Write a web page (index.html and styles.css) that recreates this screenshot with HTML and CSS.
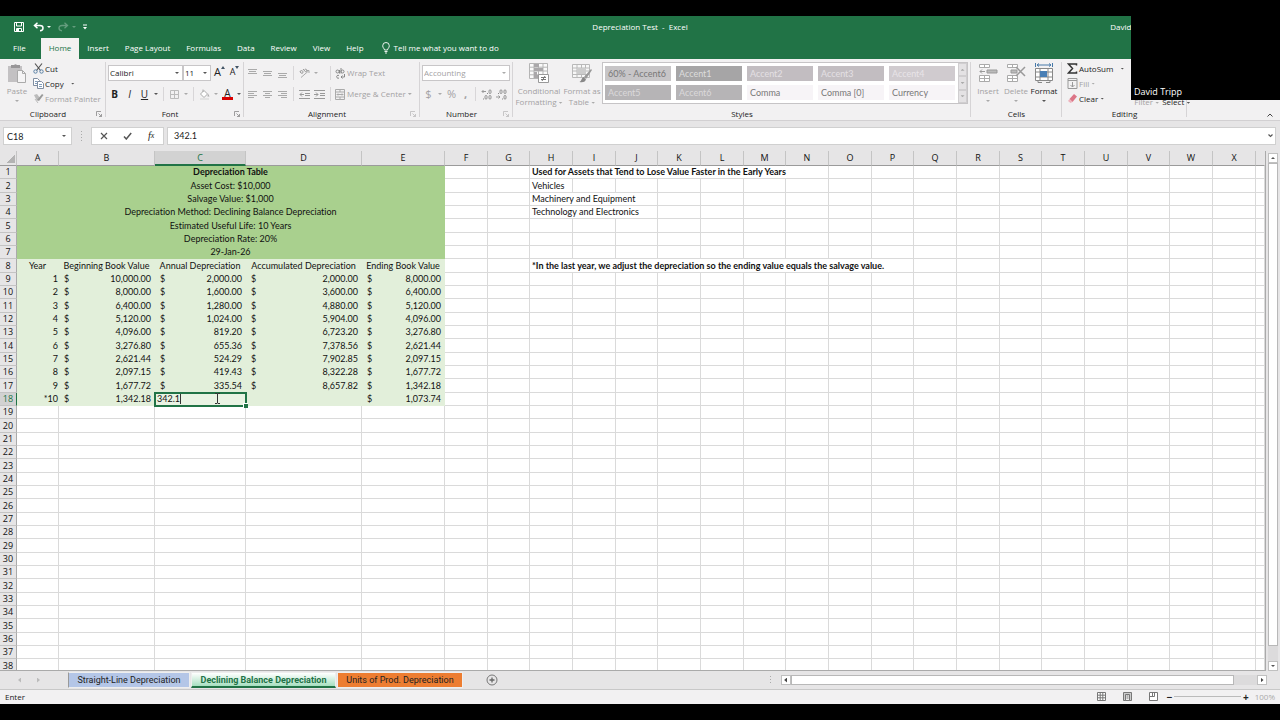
FILE: index.html
```html
<!DOCTYPE html>
<html lang="en">
<head>
<meta charset="utf-8">
<title>Depreciation Test - Excel</title>
<link rel="stylesheet" href="styles.css">
</head>
<body>
<div class="app">
  <header class="titlebar">
    <div class="quick">
      <button class="q-save" aria-label="Save"><svg width="10" height="10" viewBox="0 0 10 10"><path d="M.5.5h9v9h-9z M2.500.5v3.500h5V.5 M2.500 9.500V6.500h5v3" fill="none" stroke="#fff"/><path d="M3 7h2v2H3z" fill="#fff"/></svg></button>
      <button class="q-icon" aria-label="Undo"><svg width="11" height="10" viewBox="0 0 11 10"><path d="M4.500.8L1.500 3.500l3 2.700M1.500 3.500H7c4 0 4 5 0 5.300" fill="none" stroke="#fff" stroke-width="1.500"/></svg></button>
      <i class="caret light"></i>
      <button class="q-icon dim" aria-label="Redo"><svg width="11" height="10" viewBox="0 0 11 10"><path d="M6.500.8l3 2.700-3 2.700M9.500 3.500H4c-4 0-4 5 0 5.300" fill="none" stroke="#fff" stroke-width="1.300"/></svg></button>
      <i class="caret light dim"></i>
      <button class="q-more" aria-label="Customize toolbar"><svg width="4" height="6" viewBox="0 0 4 6"><path d="M0 1h4" stroke="#fff"/><path d="M0 3h4L2 5.500z" fill="#fff"/></svg></button>
    </div>
    <h1>Depreciation Test&nbsp; -&nbsp; Excel</h1>
    <span class="user">David Tripp</span>
  </header>
  <nav class="tabs">
    <button class="file">File</button>
    <button class="on">Home</button>
    <button>Insert</button>
    <button>Page Layout</button>
    <button>Formulas</button>
    <button>Data</button>
    <button>Review</button>
    <button>View</button>
    <button>Help</button>
    <button class="tell"><svg width="8" height="12" viewBox="0 0 8 12"><path d="M2.500 8C2.500 6.500.7 6 .7 3.800a3.300 3.300 0 0 1 6.600 0C7.300 6 5.500 6.500 5.500 8zM2.500 9.500h3M3 11h2" fill="none" stroke="#fff" stroke-width=".9"/></svg>Tell me what you want to do</button>
  </nav>

  <section class="ribbon">
    <div class="group g-clip">
      <div class="body">
        <button class="big off paste"><svg width="20" height="20" viewBox="0 0 20 20"><path d="M1 3h14v16H1z" fill="#c3c1c3"/><path d="M4 2h3a2 2 0 0 1 3 0h3v3H4z" fill="#989698"/><path d="M10.500 7.500h5l3 3v9h-8z" fill="#f5f4f5" stroke="#aaa"/><path d="M15.500 7.500v3h3" fill="none" stroke="#aaa"/></svg><span>Paste</span><i class="caret"></i></button>
        <div class="stack">
          <button><svg width="11" height="11" viewBox="0 0 11 11"><path d="M2 .5l5.500 7M9 .5L3.500 7.500" stroke="#555" stroke-width="1.200"/><circle cx="2.500" cy="8.500" r="1.700" fill="none" stroke="#5c82a6"/><circle cx="8.500" cy="8.500" r="1.700" fill="none" stroke="#5c82a6"/></svg>Cut</button>
          <button><svg width="11" height="11" viewBox="0 0 11 11"><path d="M.5.5h4l2 2v5h-6z" fill="#fff" stroke="#7f8da0"/><path d="M4.500 3.500h4l2 2v5h-6z" fill="#fff" stroke="#7f8da0"/><path d="M6 6.500h3M6 8.500h3M2 3.500h2M2 5.500h2" stroke="#7f9bbb"/></svg>Copy<i class="caret"></i></button>
          <button class="off"><svg width="11" height="11" viewBox="0 0 11 11"><path d="M1 2l3-1 3 4-3 3z" fill="#bbb"/><path d="M4 7l5-6 1.500 1L6 8z" fill="#999"/><path d="M2 6l3 4" stroke="#bbb"/></svg>Format Painter</button>
        </div>
      </div>
      <div class="label">Clipboard<svg class="launch" width="6" height="6" viewBox="0 0 6 6"><path d="M.5 5V.5H5M2.500 2.500l3 3M5.500 3v2.500H3" fill="none" stroke="#888" stroke-width=".8"/></svg></div>
    </div>

    <div class="group g-font">
      <div class="body rows">
        <div class="row">
          <span class="combo c-name"><select aria-label="Font"><option>Calibri</option></select></span>
          <span class="combo c-size"><select aria-label="Font size"><option>11</option></select></span>
          <button class="t grow" aria-label="Increase font size">A<svg width="4" height="3" viewBox="0 0 4 3"><path d="M0 3l2-3 2 3z" fill="#456"/></svg></button>
          <button class="t shrink" aria-label="Decrease font size">A<svg width="4" height="3" viewBox="0 0 4 3"><path d="M0 0l2 3 2-3z" fill="#456"/></svg></button>
        </div>
        <div class="row">
          <button class="t"><b>B</b></button>
          <button class="t"><em>I</em></button>
          <button class="t"><u>U</u></button>
          <i class="caret"></i><i class="sep"></i>
          <button class="t" aria-label="Borders"><svg width="9" height="9" viewBox="0 0 9 9"><path d="M.5.5h8v8h-8zM4.500.5v8M.5 4.500h8" fill="none" stroke="#bbb"/></svg></button>
          <i class="caret faint"></i><i class="sep"></i>
          <button class="t" aria-label="Fill color"><svg width="11" height="11" viewBox="0 0 11 11"><path d="M1.500 5L5 1.500l3.500 3.500L5 8.500zM4 3V.5" fill="#fff" stroke="#aaa"/><path d="M9 4.500l1.500 3H8.500z" fill="#aaa"/><path d="M1 10h9" stroke="#ddd" stroke-width="1.500"/></svg></button>
          <i class="caret faint"></i>
          <button class="t ink" aria-label="Font color">A</button>
          <i class="caret"></i>
        </div>
      </div>
      <div class="label">Font<svg class="launch" width="6" height="6" viewBox="0 0 6 6"><path d="M.5 5V.5H5M2.500 2.500l3 3M5.500 3v2.500H3" fill="none" stroke="#888" stroke-width=".8"/></svg></div>
    </div>

    <div class="group g-align">
      <div class="body rows off">
        <div class="row">
          <button class="t" aria-label="Top align"><svg width="9" height="11" viewBox="0 0 9 11"><path d="M0 1.500h9M1 3.500h7M0 5.500h9" stroke="#aaa"/></svg></button>
          <button class="t" aria-label="Middle align"><svg width="9" height="11" viewBox="0 0 9 11"><path d="M0 3.500h9M1 5.500h7M0 7.500h9" stroke="#aaa"/></svg></button>
          <button class="t" aria-label="Bottom align"><svg width="9" height="11" viewBox="0 0 9 11"><path d="M0 5.500h9M1 7.500h7M0 9.500h9" stroke="#aaa"/></svg></button>
          <i class="sep"></i>
          <button class="t" aria-label="Orientation"><svg width="11" height="10" viewBox="0 0 11 10"><path d="M2 9.500L9.500 3M7.500 2.500h2.500v2.500" fill="none" stroke="#aaa"/><path d="M1 4a1.500 1.500 0 1 1 2 1.500zM4 1l2.500 2.800a1.300 1.300 0 1 0-1-2" fill="none" stroke="#999"/></svg></button>
          <i class="caret faint"></i><i class="sep s2"></i>
          <button class="wide"><svg width="10" height="11" viewBox="0 0 10 11"><circle cx="2.500" cy="3.500" r="1.500" fill="none" stroke="#888"/><path d="M4.500 2v3.500M6 0v5.500" stroke="#888"/><circle cx="7.500" cy="3.500" r="1.500" fill="none" stroke="#888"/><path d="M4 7.500a1.500 1.500 0 1 0 0 2.500M9.500 6v3H6M7.500 7.500L6 9l1.500 1.500" fill="none" stroke="#888"/></svg>Wrap Text</button>
        </div>
        <div class="row">
          <button class="t" aria-label="Align left"><svg width="9" height="9" viewBox="0 0 9 9"><path d="M0 1.500h9M0 3.500h6M0 5.500h9M0 7.500h6" stroke="#aaa"/></svg></button>
          <button class="t" aria-label="Center"><svg width="9" height="9" viewBox="0 0 9 9"><path d="M0 1.500h9M2 3.500h5M0 5.500h9M2 7.500h5" stroke="#aaa"/></svg></button>
          <button class="t" aria-label="Align right"><svg width="9" height="9" viewBox="0 0 9 9"><path d="M0 1.500h9M3 3.500h6M0 5.500h9M3 7.500h6" stroke="#aaa"/></svg></button>
          <i class="sep"></i>
          <button class="t" aria-label="Decrease indent"><svg width="11" height="9" viewBox="0 0 11 9"><path d="M0 .5h11M6 3.500h5M6 5.500h5M0 8.500h11M5 4.500H1M3 2.500l-2 2 2 2" fill="none" stroke="#999"/></svg></button>
          <button class="t" aria-label="Increase indent"><svg width="11" height="9" viewBox="0 0 11 9"><path d="M0 .5h11M6 3.500h5M6 5.500h5M0 8.500h11M0 4.500h4M2 2.500l2 2-2 2" fill="none" stroke="#999"/></svg></button>
          <i class="sep s1"></i>
          <button class="wide"><svg width="10" height="11" viewBox="0 0 10 11"><path d="M.5.5h9v10h-9zM.5 3h9M.5 8h9M5 .5V3M5 8v2.500M2 5.500h6M3 4.500L2 5.500l1 1M7 4.500l1 1-1 1" fill="none" stroke="#aaa"/></svg>Merge &amp; Center</button><i class="caret faint"></i>
        </div>
      </div>
      <div class="label">Alignment<svg class="launch" width="6" height="6" viewBox="0 0 6 6"><path d="M.5 5V.5H5M2.500 2.500l3 3M5.500 3v2.500H3" fill="none" stroke="#bbb" stroke-width=".8"/></svg></div>
    </div>

    <div class="group g-num">
      <div class="body rows off">
        <div class="row"><span class="combo c-fmt"><select aria-label="Number format"><option>Accounting</option></select></span></div>
        <div class="row">
          <button class="t sym">$</button><i class="caret faint"></i>
          <button class="t sym">%</button>
          <button class="t sym comma">,</button><i class="sep"></i>
          <button class="t" aria-label="Increase decimal"><svg width="11" height="11" viewBox="0 0 11 11"><path d="M5 2.500H1M2.500 1L1 2.500 2.500 4" fill="none" stroke="#999"/><path d="M6 4.500h1" stroke="#888"/><rect x="8" y=".9" width="2" height="3.600" rx="1" fill="none" stroke="#888" stroke-width=".9"/><path d="M2 10h1" stroke="#888"/><rect x="4" y="6.500" width="2" height="3.600" rx="1" fill="none" stroke="#888" stroke-width=".9"/><rect x="8" y="6.500" width="2" height="3.600" rx="1" fill="none" stroke="#888" stroke-width=".9"/></svg></button>
          <button class="t" aria-label="Decrease decimal"><svg width="11" height="11" viewBox="0 0 11 11"><path d="M0 8h4M2.500 6.500L4 8 2.500 9.500" fill="none" stroke="#999"/><path d="M2 4.500h1" stroke="#888"/><rect x="4" y=".9" width="2" height="3.600" rx="1" fill="none" stroke="#888" stroke-width=".9"/><rect x="8" y=".9" width="2" height="3.600" rx="1" fill="none" stroke="#888" stroke-width=".9"/><path d="M6 10h1" stroke="#888"/><rect x="8" y="6.500" width="2" height="3.600" rx="1" fill="none" stroke="#888" stroke-width=".9"/></svg></button>
        </div>
      </div>
      <div class="label">Number<svg class="launch" width="6" height="6" viewBox="0 0 6 6"><path d="M.5 5V.5H5M2.500 2.500l3 3M5.500 3v2.500H3" fill="none" stroke="#bbb" stroke-width=".8"/></svg></div>
    </div>

    <div class="group g-style">
      <div class="body off">
        <button class="big cond"><svg width="20" height="20" viewBox="0 0 20 20"><path d="M.5.5h18v15H.5zM5 .5v15M9.500.5v15M14 .5v15M.5 4.200h18M.5 8h18M.5 11.800h18" fill="#fafafa" stroke="#b5b5b5"/><path d="M5 1h5v3H5zM5 5h9v3H5zM5 9h3v3H5zM5 12h6v3H5z" fill="#a9a7a9"/><path d="M9.500 11.500h10v8h-10z" fill="#fff" stroke="#999"/><path d="M12 14.500h5M12 16.500h5M16 13l-3 5" stroke="#777"/></svg><span>Conditional<br>Formatting <i class="caret"></i></span></button>
        <button class="big fmt"><svg width="20" height="20" viewBox="0 0 20 20"><path d="M.5 1.500h17v13H.5zM5 1.500v13M9.500 1.500v13M13.500 1.500v13M.5 5h17M.5 8h17M.5 11.500h17" fill="#f7f7f7" stroke="#b9b9b9"/><path d="M5 5h9v6H5z" fill="#ccc"/><path d="M19 6l-7 8 2 2 6-9z" fill="#999"/><path d="M11.500 14l2.500 2.500c-1 3-4 3-6.500 2.500 2-1 2-4 4-5z" fill="#888"/></svg><span>Format as<br>Table <i class="caret"></i></span></button>
        <div class="gallery">
          <div class="swatches">
            <button class="s60">60% - Accent6</button><button class="s1">Accent1</button><button class="s2c">Accent2</button><button class="s2c">Accent3</button><button class="s4">Accent4</button>
            <button class="s5">Accent5</button><button class="s5">Accent6</button><button>Comma</button><button>Comma [0]</button><button>Currency</button>
          </div>
          <div class="spin"><button aria-label="Scroll up"><i class="caret up faint"></i></button><button aria-label="Scroll down"><i class="caret faint"></i></button><button aria-label="More styles"><i class="caret faint"></i></button></div>
        </div>
      </div>
      <div class="label">Styles</div>
    </div>

    <div class="group g-cells">
      <div class="body">
        <button class="big off"><svg width="20" height="20" viewBox="0 0 20 20"><path d="M1.500 1.500h10v3h-10zM6.500 1.500v3M1.500 12.500h10v6h-10zM6.500 12.500v6M1.500 15.500h10" fill="#fff" stroke="#aaa"/><path d="M9 7h10v3H9z" fill="#bbb" stroke="#999"/><path d="M7 8.500H2M4 6.500l-2 2 2 2" fill="none" stroke="#999"/></svg><span>Insert</span><i class="caret"></i></button>
        <button class="big off"><svg width="20" height="20" viewBox="0 0 20 20"><path d="M1.500 1.500h10v3h-10zM6.500 1.500v3M1.500 12.500h10v6h-10zM6.500 12.500v6M1.500 15.500h10" fill="#fff" stroke="#aaa"/><path d="M5 7h6v3H5z" fill="#bbb" stroke="#999"/><path d="M10 4l9 9M19 4l-9 9" stroke="#999" stroke-width="1.500"/></svg><span>Delete</span><i class="caret"></i></button>
        <button class="big"><svg width="20" height="20" viewBox="0 0 20 20"><path d="M1.500 0v4M18.500 0v4M3 2h14M5 .500L3 2l2 1.500M15 .500L17 2l-2 1.500" fill="none" stroke="#4779a8"/><path d="M1.500 5.500h17v12h-17zM6 5.500v12M14 5.500v12M1.500 9h17M1.500 14h17" fill="#fff" stroke="#888"/><path d="M6 8h7v6H6z" fill="#4a7fb5"/><path d="M4 17.500v2h4M16 17.500v2h-4" fill="none" stroke="#888"/></svg><span>Format</span><i class="caret"></i></button>
      </div>
      <div class="label">Cells</div>
    </div>

    <div class="group g-edit">
      <div class="body">
        <div class="stack">
          <button><svg width="11" height="11" viewBox="0 0 11 11"><path d="M9.500 2.500V1h-8l4 4.500-4 4.500h8V8.500" fill="none" stroke="#333" stroke-width="1.500"/></svg>AutoSum<i class="caret"></i></button>
          <button class="off"><svg width="11" height="11" viewBox="0 0 11 11"><path d="M1 .5h9v10H1zM1 2.500h9M5.500 4v5M3.500 7l2 2 2-2" fill="none" stroke="#999"/></svg>Fill<i class="caret near"></i></button>
          <button><svg width="11" height="11" viewBox="0 0 11 11"><path d="M2.500 6L7 1l3 2.500L5.500 9z" fill="#dc7587"/><path d="M2.500 6L1 8l2.500 2L5.500 9z" fill="#eeb2bc"/></svg>Clear<i class="caret near"></i></button>
        </div>
        <div class="more"><button class="off">Filter <i class="caret"></i></button><button>Select <i class="caret"></i></button></div>
      </div>
      <div class="label">Editing</div>
    </div>
    <button class="collapse" aria-label="Collapse ribbon"><svg width="6" height="4" viewBox="0 0 6 4"><path d="M.5 3.500L3 1l2.500 2.500" fill="none" stroke="#444"/></svg></button>
  </section>

  <section class="fbar">
    <span class="combo namebox"><input value="C18" aria-label="Name box"></span>
    <svg class="dots" width="3" height="10" viewBox="0 0 3 10"><path d="M1.500 0v10" stroke="#aaa" stroke-dasharray="1 2"/></svg>
    <div class="fbtns">
      <button aria-label="Cancel"><svg width="8" height="8" viewBox="0 0 8 8"><path d="M1 1l6 6M7 1L1 7" stroke="#555" stroke-width="1.200"/></svg></button>
      <button aria-label="Enter"><svg width="9" height="8" viewBox="0 0 9 8"><path d="M1 4.500L3.300 7 8.200 1" fill="none" stroke="#555" stroke-width="1.500"/></svg></button>
      <button class="fx" aria-label="Insert function"><em>f</em><small>x</small></button>
    </div>
    <span class="formula"><input value="342.1" aria-label="Formula bar"><svg width="5" height="4" viewBox="0 0 5 4"><path d="M.5.5l2 2 2-2" fill="none" stroke="#555" stroke-width="1.200"/></svg></span>
  </section>

  <main class="sheet">
    <div class="gridwrap"><table class="grid" id="grid"></table></div>
    <div class="vscroll"><button aria-label="Scroll up"><i class="caret up"></i></button><div class="thumb"></div><div class="track"></div><button aria-label="Scroll down"><i class="caret"></i></button></div>
  </main>

  <footer class="sheetbar">
    <div class="sheetnav"><i class="arrow l"></i><i class="arrow r"></i></div>
    <button class="st blue">Straight-Line Depreciation</button>
    <button class="st green">Declining Balance Depreciation</button>
    <button class="st orange">Units of Prod. Depreciation</button>
    <button class="plus" aria-label="New sheet"><svg width="12" height="12" viewBox="0 0 12 12"><circle cx="6" cy="6" r="5" fill="none" stroke="#777"/><path d="M6 3.500v5M3.500 6h5" stroke="#666" stroke-width="1.300"/></svg></button>
    <svg class="dots grip" width="3" height="8" viewBox="0 0 3 8"><path d="M1.500 0v8" stroke="#aaa" stroke-dasharray="1 2"/></svg>
    <div class="hscroll"><button aria-label="Scroll left"><i class="arrow l dark"></i></button><div class="thumb"></div><div class="track"></div><button aria-label="Scroll right"><i class="arrow r dark"></i></button></div>
  </footer>
  <div class="status">
    <span class="mode">Enter</span>
    <button aria-label="Normal view"><svg width="9" height="9" viewBox="0 0 9 9"><path d="M.5.5h8v8h-8zM3.200.5v8M5.800.5v8M.5 3.200h8M.5 5.800h8" fill="#fff" stroke="#777"/></svg></button>
    <button aria-label="Page layout view"><svg width="9" height="9" viewBox="0 0 9 9"><path d="M.5.5h8v8h-8z" fill="#ccc" stroke="#777"/><path d="M2.500 2.500h4v6h-4zM3.500 4h2M3.500 6h2" fill="#eee" stroke="#777"/></svg></button>
    <button aria-label="Page break view"><svg width="9" height="9" viewBox="0 0 9 9"><path d="M.5.5h8v8h-8zM3.500.5v4M.5 4.500h5M5.500.5v4" fill="#fff" stroke="#777"/></svg></button>
    <div class="zoom"><span>−</span><i class="rail"></i><span>+</span></div>
    <span class="pct">100%</span>
  </div>
  <div class="cam"><span>David Tripp</span></div>
</div>
<script src="grid.js"></script>
</body>
</html>
```
FILE: grid.js
```js
const columns = [42, 96, 91, 116, 83];
const letters = "ABCDEFGHIJKLMNOPQRSTUVWX".split("");
const wideCycle = [43, 42, 43];
const banner = ["Depreciation Table", "Asset Cost: $10,000", "Salvage Value: $1,000",
  "Depreciation Method: Declining Balance Depreciation", "Estimated Useful Life: 10 Years",
  "Depreciation Rate: 20%", "29-Jan-26"];
const heads = ["Year", "Beginning Book Value", "Annual Depreciation", "Accumulated Depreciation", "Ending Book Value"];
const schedule = [
  ["1", "10,000.00", "2,000.00", "2,000.00", "8,000.00"],
  ["2", "8,000.00", "1,600.00", "3,600.00", "6,400.00"],
  ["3", "6,400.00", "1,280.00", "4,880.00", "5,120.00"],
  ["4", "5,120.00", "1,024.00", "5,904.00", "4,096.00"],
  ["5", "4,096.00", "819.20", "6,723.20", "3,276.80"],
  ["6", "3,276.80", "655.36", "7,378.56", "2,621.44"],
  ["7", "2,621.44", "524.29", "7,902.85", "2,097.15"],
  ["8", "2,097.15", "419.43", "8,322.28", "1,677.72"],
  ["9", "1,677.72", "335.54", "8,657.82", "1,342.18"],
  ["*10", "1,342.18", null, "", "1,073.74"]
];
const notes = {
  1: { text: "Used for Assets that Tend to Lose Value Faster in the Early Years", span: 7, bold: true },
  2: { text: "Vehicles", span: 1 },
  3: { text: "Machinery and Equipment", span: 3 },
  4: { text: "Technology and Electronics", span: 3 },
  8: { text: "*In the last year, we adjust the depreciation so the ending value equals the salvage value.", span: 9, bold: true }
};

const widths = columns.concat(letters.slice(5).map((_, i) => wideCycle[i % 3]));
let html = '<colgroup><col style="width:17px">' +
  widths.map(w => `<col style="width:${w}px">`).join("") + "<col></colgroup>";
html += '<thead><tr><th class="corner"></th>' +
  letters.map(l => `<th${l === "C" ? ' class="sel"' : ""}>${l}</th>`).join("") + "<th></th></tr></thead><tbody>";

for (let r = 1; r <= 38; r++) {
  html += `<tr><th${r === 18 ? ' class="sel"' : ""}>${r}</th>`;
  if (r <= 7) {
    html += `<td colspan="5" class="banner${r === 1 ? " bold" : ""}">${banner[r - 1]}</td>`;
  } else if (r === 8) {
    html += heads.map(h => `<td class="fill head">${h}</td>`).join("");
  } else if (r <= 18) {
    const row = schedule[r - 9];
    html += `<td class="fill year">${row[0]}</td>`;
    html += row.slice(1).map(v => {
      if (v === null) return '<td class="fill active"><div><span>342.1</span><svg width="7" height="11" viewBox="0 0 7 11"><path d="M1 .5h2l.5.5.5-.5h2M3.500 1v9M1 10.500h2l.5-.5.5.5h2" fill="none" stroke="#333"/></svg></div></td>';
      if (v === "") return '<td class="fill"></td>';
      return `<td class="fill"><div class="money"><span>$</span><span>${v}</span></div></td>`;
    }).join("");
  } else {
    html += "<td></td>".repeat(5);
  }
  html += "<td></td><td></td>";
  const note = notes[r];
  const span = note ? note.span : 0;
  if (note) html += `<td colspan="${span}" class="note${note.bold ? " bold" : ""}">${note.text}</td>`;
  html += "<td></td>".repeat(18 - span) + "</tr>";
}
document.getElementById("grid").innerHTML = html + "</tbody>";
```
FILE: styles.css
```css
* { box-sizing: border-box; }
body { margin: 0; background: #000; color: #222; font: 8px/12px "Open Sans", "Noto Sans", sans-serif; }
button, input, select { font: inherit; color: inherit; border: 0; padding: 0; margin: 0; background: none; border-radius: 0; outline: 0; }
button { white-space: nowrap; }
svg { flex: none; display: block; }
.app { position: relative; height: 100vh; padding: 16px 0; display: flex; flex-direction: column; }

.caret { display: inline-block; flex: none; width: 4px; height: 2px; background: #555; clip-path: polygon(0 0, 100% 0, 50% 100%); vertical-align: middle; }
.caret.up { clip-path: polygon(50% 0, 100% 100%, 0 100%); }
.caret.light { background: #fff; }
.off .caret, .caret.faint { background: #aaa; }
.off { color: #a3a1a3; }

.titlebar { flex: none; height: 22px; background: #217346; color: #fff; display: grid; grid-template-columns: 1fr auto 1fr; align-items: center; }
.titlebar h1 { margin: 0; font-size: 8px; line-height: 12px; font-weight: 400; }
.quick { display: flex; align-items: center; padding-left: 14px; }
.quick button { margin-right: 9px; }
.quick .q-icon { margin: 0 3px 0 0; }
.quick .caret { margin-right: 7px; }
.quick .dim { opacity: .3; }
.quick .q-more { margin: 0; }
.user { justify-self: end; padding-right: 127px; }

.tabs { flex: none; height: 21px; background: #217346; color: #fff; display: flex; }
.tabs button { padding: 0 8px 1px; height: 21px; }
.tabs .file { padding: 0 15px 1px 13px; }
.tabs .on { background: #f3f2f1; color: #217346; }
.tabs .tell { display: flex; align-items: center; gap: 4px; padding-left: 10px; }

.ribbon { flex: none; height: 62px; background: #f2f1f2; border-bottom: 1px solid #d2d0d2; display: flex; position: relative; }
.group { flex: none; display: flex; flex-direction: column; position: relative; padding-top: 2px; }
.group::after { content: ""; position: absolute; right: 0; top: 3px; bottom: 3px; width: 1px; background: #d6d4d6; }
.body { flex: 1; display: flex; }
.label { height: 12px; text-align: center; line-height: 11px; position: relative; padding-right: 10px; }
.launch { position: absolute; right: 4px; top: 3px; }
.g-clip { width: 106px; }
.g-font { width: 138px; }
.g-align { width: 176px; }
.g-num { width: 93px; }
.g-style { width: 458px; }
.g-cells { width: 91px; }
.g-edit { width: 125px; }
.g-style .label, .g-cells .label, .g-edit .label { padding-right: 0; }

.big { display: flex; flex-direction: column; align-items: center; width: 28px; padding-top: 2px; line-height: 11px; }
.big svg { margin-bottom: 2px; }
.big > .caret { margin-top: 4px; }
.paste { margin: 0 2px 0 3px; }
.stack { display: flex; flex-direction: column; }
.stack button { display: flex; align-items: center; gap: 1px; height: 15px; }
.stack .caret { margin-left: 6px; }
.stack .near { margin-left: 1px; }

.rows { flex-direction: column; padding: 3px 0 0 1px; gap: 3px; }
.row { display: flex; align-items: center; height: 18px; }
.row .t { width: 15px; height: 15px; display: flex; align-items: center; justify-content: center; font-size: 10px; }
.row .caret { margin: 0 2px; }
.row .sep { flex: none; width: 1px; height: 14px; background: #d8d6d8; margin: 0 3px; }
.row .grow { margin-left: 1px; font-size: 11px; align-items: flex-start; }
.row .shrink { font-size: 9px; align-items: flex-start; }
.row .ink { height: 12px; border-bottom: 3px solid #d80000; width: 11px; margin: 0 2px; }
.row .sym { font-size: 11px; }
.row .comma { width: 13px; font-weight: 700; }
.row .s2 { margin: 0 4px 0 10px; }
.row .s1 { margin: 0 4px 0 3px; }
.wide { display: flex; align-items: center; gap: 2px; }
.combo { position: relative; display: flex; height: 16px; background: #fff; border: 1px solid #c8c6c8; }
.combo::after { content: ""; position: absolute; right: 3px; top: 50%; margin-top: -1px; width: 4px; height: 2px; background: #555; clip-path: polygon(0 0, 100% 0, 50% 100%); }
.off .combo::after { background: #aaa; }
.combo select, .combo input { appearance: none; width: 100%; height: 100%; padding-left: 1px; }
.c-name { width: 75px; margin-left: 1px; }
.c-size { width: 28px; }
.c-fmt { width: 88px; margin-left: 1px; }

.cond { width: 44px; margin-left: 4px; }
.fmt { width: 42px; }
.gallery { display: flex; height: 42px; margin: 1px 0 0 -1px; border: 1px solid #c6c4c6; background: #fff; }
.swatches { display: grid; grid-template-columns: repeat(5, 66px); grid-auto-rows: 15px; gap: 4px 5px; padding: 3px 3px 3px 2px; }
.swatches button { background: #f7f4f7; color: #777; text-align: left; padding-left: 3px; font: 9px/14px Lato, sans-serif; }
.swatches .s60 { background: #c7c5c7; }
.swatches .s1 { background: #a6a5a6; color: #ddd; }
.swatches .s2c { background: #c2bdc1; color: #e4e0e4; }
.swatches .s4 { background: #d0cbcf; color: #e8e4e8; }
.swatches .s5 { background: #b6b4b6; color: #dbd9db; }
.spin { display: flex; flex-direction: column; width: 9px; background: #e4e2e4; }
.spin button { flex: 1; display: flex; align-items: center; justify-content: center; border: 1px solid #d0ced0; }
.g-cells .body { padding-left: 3px; }
.g-edit .body { padding-left: 5px; }
.more { display: flex; gap: 3px; align-items: flex-end; padding: 0 0 0 10px; }
.more button { height: 12px; }
.collapse { margin-left: auto; align-self: flex-end; padding: 0 7px 3px; }

.fbar { flex: none; display: flex; background: #e6e5e6; padding: 6px 4px 6px 3px; height: 30px; align-items: stretch; font-family: Lato, sans-serif; font-size: 9px; }
.namebox { width: 69px; height: 18px; border-color: #d0d0d0; }
.namebox::after { right: 5px; }
.namebox input { padding-left: 3px; }
.fbar .dots { align-self: center; margin: 0 8px; }
.fbtns { display: flex; width: 73px; background: #fff; border: 1px solid #d0d0d0; }
.fbtns button { flex: 1; display: flex; align-items: center; justify-content: center; }
.fbtns .fx { font: 10px/12px "Liberation Serif", serif; }
.fx small { font-size: 8px; font-style: italic; }
.formula { flex: 1; display: flex; align-items: center; background: #fff; border: 1px solid #d0d0d0; margin-left: 3px; padding: 0 2px 0 6px; }
.formula input { flex: 1; }

.sheet { flex: 1; min-height: 0; display: flex; background: #e6e5e6; }
.gridwrap { flex: 1; min-width: 0; overflow: hidden; border-right: 1px solid #aaa; border-bottom: 1px solid #aaa; margin-right: 2px; }
.grid { width: 100%; table-layout: fixed; border-collapse: separate; border-spacing: 0; font: 9px/12px Lato, sans-serif; font-variant-ligatures: none; color: #111; background: #fff; }
.grid th { font: 9px/12px "Open Sans", sans-serif; padding: 0; background: #e6e5e6; border-right: 1px solid #c4c4c4; border-bottom: 1px solid #c4c4c4; }
.grid thead th { height: 15px; border-bottom-color: #9b9b9b; }
.grid thead th:last-child { border-right-color: #e6e5e6; }
.grid tbody th { border-right-color: #aaa; }
.grid .corner { background: linear-gradient(135deg, transparent 50%, #b3b3b3 50%) 7px 4px / 8px 8px no-repeat #e6e5e6; }
.grid th.sel { background: #d2d2d2; color: #217346; border-bottom-color: #217346; }
.grid thead th.sel { border-bottom-width: 2px; }
.grid tbody th.sel { border-bottom-color: #c4c4c4; border-right-color: #217346; }
.grid td { padding: 0; white-space: nowrap; border-right: 1px solid #dadada; border-bottom: 1px solid #dadada; }
.grid tbody tr { height: 13px; }
.grid tbody tr:nth-child(3n+2) { height: 14px; }
.grid .banner { background: #a9d08e; border-color: #a9d08e; text-align: center; }
.grid .fill { background: #e2efda; border-color: #e2efda; }
.grid .head { text-align: center; }
.grid .year { text-align: right; }
.grid .bold { font-weight: 700; }
.grid .note { padding-left: 2px; }
.money { display: flex; justify-content: space-between; padding: 0 3px 0 5px; }
.grid .active { background: #e9f3e3; outline: 2px solid #217346; outline-offset: -1px; position: relative; }
.active::after { content: ""; position: absolute; right: -3px; bottom: -3px; width: 4px; height: 4px; background: #217346; border: 1px solid #fff; border-width: 1px 0 0 1px; }
.active div { padding-left: 2px; height: 12px; }
.active span { border-right: 1px solid #333; }
.active svg { position: absolute; left: 59px; top: 0; }

.vscroll { flex: none; width: 12px; padding: 2px 2px 0 0; display: flex; flex-direction: column; }
.vscroll button, .hscroll button { flex: none; width: 10px; height: 10px; background: #fff; border: 1px solid #c0c0c0; display: flex; align-items: center; justify-content: center; }
.thumb { background: #fff; border: 1px solid #b8b8b8; }
.track { background: #dcdbdc; }
.vscroll .thumb { flex: 97; }
.vscroll .track { flex: 3; }

.sheetbar { flex: none; height: 19px; background: #e6e5e6; border-bottom: 1px solid #c8c8c8; display: flex; align-items: center; font-family: Roboto, sans-serif; }
.sheetnav { width: 68px; display: flex; gap: 16px; padding-left: 18px; }
.arrow { width: 3px; height: 5px; background: #bbb; clip-path: polygon(0 0, 100% 50%, 0 100%); }
.arrow.l { clip-path: polygon(100% 0, 0 50%, 100% 100%); }
.arrow.dark { background: #444; }
.st { height: 16px; margin-right: 1px; font-size: 9px; border: 1px solid #eee; }
.blue { width: 122px; background: #b4c6e7; border-left-color: #999; }
.green { width: 145px; background: linear-gradient(#fff, #a6dfc0); color: #217346; font-weight: 700; border-bottom: 2px solid #217346; }
.orange { width: 126px; background: #ed7d31; }
.plus { margin-left: 22px; }
.grip { margin-left: auto; }
.hscroll { width: 38%; display: flex; margin: 0 13px 0 9px; height: 10px; }
.hscroll .thumb { flex: 95; }
.hscroll .track { flex: 5; }

.status { flex: none; height: 14px; background: #f2f1f2; display: flex; align-items: center; padding: 0 5px 1px; }
.mode { margin-right: auto; }
.status button { margin-right: 17px; }
.zoom { display: flex; align-items: center; width: 82px; margin: 0 6px 0 -8px; font-weight: 700; font-size: 10px; }
.rail { flex: 1; height: 1px; background: #bbb; margin: 0 2px; }
.pct { color: #aaa; }

.cam { position: absolute; right: 0; top: 0; width: 149px; height: 100px; background: #000; color: #fff; display: flex; align-items: flex-end; padding: 0 0 2px 3px; font-size: 9px; }
```
